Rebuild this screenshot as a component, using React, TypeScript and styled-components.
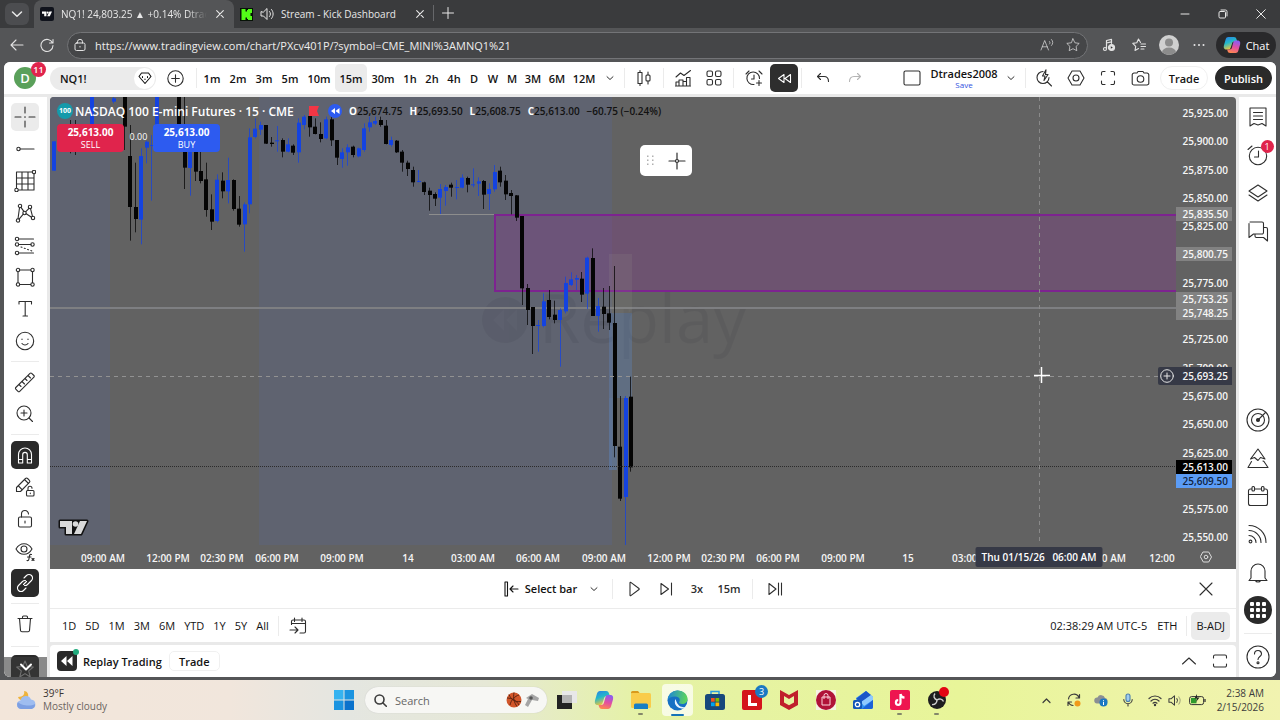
import React from 'react';
import styled, { createGlobalStyle, css } from 'styled-components';

const ui = '"Open Sans", "Noto Sans", sans-serif';

const GlobalStyle = createGlobalStyle`
  *, *::before, *::after { box-sizing: border-box; }
  body { margin: 0; background: #545557; font-family: ${ui}; color: #131313; }
  button, input { font: inherit; color: inherit; border: 0; padding: 0; margin: 0; background: none; }
  button { cursor: pointer; display: inline-flex; align-items: center; justify-content: center; white-space: nowrap; }
  svg { display: block; flex: none; }
`;

/* ---------- icons ---------- */

const Glyph = styled.svg<{ $s: number; $w: number }>`
  width: ${(p) => p.$s}px;
  height: ${(p) => p.$s}px;
  fill: none;
  stroke: currentColor;
  stroke-width: ${(p) => p.$w};
  stroke-linecap: round;
  stroke-linejoin: round;
`;

type IconProps = { size?: number; box?: number; w?: number; children: React.ReactNode };
const Icon = ({ size = 22, box = 22, w = 1.1, children }: IconProps) => (
  <Glyph $s={size} $w={w} viewBox={`0 0 ${box} ${box}`} aria-hidden="true">
    {children}
  </Glyph>
);

const Chevron = ({ size = 8 }: { size?: number }) => (
  <Icon size={size} box={8} w={1}>
    <path d="M1 2.7l3 2.8 3-2.8" />
  </Icon>
);

const TvMark = () => (
  <g stroke="none">
    <path d="M0 0h12v13H6V6H0z" />
    <circle cx="15.5" cy="3" r="2.8" />
    <path d="M20 0h7l-6 13h-7z" />
  </g>
);

const CopilotMark = ({ size }: { size: number }) => (
  <svg width={size} height={size} viewBox="0 0 20 20" aria-hidden="true">
    <defs>
      <linearGradient id="cpA" x1="0" y1="0" x2="0.4" y2="1">
        <stop offset="0" stopColor="#2b7de9" />
        <stop offset=".5" stopColor="#22b8c9" />
        <stop offset="1" stopColor="#f2c53a" />
      </linearGradient>
      <linearGradient id="cpB" x1=".6" y1="0" x2="0.3" y2="1">
        <stop offset="0" stopColor="#8c5cf0" />
        <stop offset=".5" stopColor="#e34fa0" />
        <stop offset="1" stopColor="#ff8a4c" />
      </linearGradient>
    </defs>
    <path d="M6 1h6c2 0 2.5 1 3 2.5L16 6h-3c-2 0-2.6 1-3 2.5L8.5 13c-.5 1.5-1 2-3 2H4c-3 0-3.5-2-3-4.5L3 3.5C3.5 2 4.5 1 6 1z" fill="url(#cpA)" />
    <path d="M14 19H8c-2 0-2.5-1-3-2.5L4.5 15H7c2 0 2.6-1 3-2.5L11.5 7c.5-1.5 1-2 3-2H16c3 0 3.5 2 3 4.5l-2 7c-.5 1.5-1.5 2.5-3 2.5z" fill="url(#cpB)" />
  </svg>
);

/* ---------- browser frame ---------- */

const Page = styled.div`
  display: flex;
  flex-direction: column;
  height: 100vh;
  min-height: 680px;
`;

const TabStrip = styled.div`
  display: flex;
  align-items: stretch;
  height: 28px;
  background: #3a3b3d;
  color: #e8e8e8;
  font-size: 10px;
`;

const TabMenuButton = styled.button`
  width: 24px;
  height: 22px;
  margin: 3px 5px;
  border-radius: 6px;
  background: #4c4d50;
`;

const Tab = styled.div<{ $active?: boolean }>`
  display: flex;
  align-items: center;
  gap: 7px;
  width: 200px;
  padding: 0 8px 0 6px;
  border-radius: 8px 8px 0 0;
  background: ${(p) => (p.$active ? '#545557' : 'transparent')};
`;

const TabTitle = styled.span<{ $fade?: boolean }>`
  flex: 1;
  overflow: hidden;
  white-space: nowrap;
  ${(p) => p.$fade && css`mask-image: linear-gradient(90deg, #000 86%, transparent);`}
`;

const StripButton = styled.button`
  width: 12px;
`;

const NewTab = styled.button`
  width: 28px;
  height: 16px;
  margin-top: 5px;
  margin-left: -1px;
  border-left: 1px solid #66676a;
`;

const WindowButtons = styled.div`
  display: flex;
  margin-left: auto;
`;

const WindowButton = styled.button`
  width: 38px;
`;

const AddressRow = styled.div`
  display: flex;
  align-items: center;
  height: 34px;
  padding: 0 4px 0 5px;
  color: #e2e2e2;
`;

const NavButton = styled.button<{ $w?: number }>`
  width: ${(p) => p.$w ?? 30}px;
  height: 26px;
`;

const AddressField = styled.form`
  display: flex;
  align-items: center;
  flex: 1;
  height: 27px;
  margin-left: 2px;
  margin-right: 6px;
  padding: 0 1px 0 6px;
  border: 1px solid #737477;
  border-radius: 14px;
  background: #454648;
`;

const AddressInput = styled.input`
  flex: 1;
  min-width: 0;
  margin-left: 9px;
  font-size: 11px;
  color: #ededed;
  outline: 0;
`;

const ProfilePic = styled.button`
  width: 20px;
  height: 20px;
  margin: 0 5px;
  border-radius: 50%;
  overflow: hidden;
  background: #d0d0d0;
`;

const ChatButton = styled.button`
  gap: 5px;
  width: 60px;
  height: 26px;
  margin-left: 2px;
  border-radius: 13px;
  background: #29292b;
  color: #fff;
  font-size: 11px;
`;

/* ---------- application shell ---------- */

const Workspace = styled.main`
  display: flex;
  flex-direction: column;
  gap: 3px;
  flex: 1;
  min-height: 0;
  margin: 0 4px 3px 4px;
  border-radius: 6px;
  overflow: hidden;
  background: #e9e9e9;
`;

const TopBar = styled.div`
  display: flex;
  align-items: center;
  height: 32px;
  padding: 0 4px 0 10px;
  background: #fff;
  font-size: 11px;
  font-weight: 600;
`;

const Avatar = styled.button`
  position: relative;
  width: 22px;
  height: 22px;
  border-radius: 50%;
  background: #5aa05a;
  color: #fff;
  font-size: 13px;
`;

const Badge = styled.span`
  position: absolute;
  top: -5px;
  right: -10px;
  min-width: 15px;
  height: 15px;
  border-radius: 8px;
  background: #e0244c;
  color: #fff;
  font-size: 9px;
  line-height: 15px;
  text-align: center;
`;

const SymbolSearch = styled.div`
  display: flex;
  align-items: center;
  width: 106px;
  height: 23px;
  margin-left: 14px;
  padding: 0 1px 0 10px;
  border-radius: 12px;
  background: #ebebeb;
`;

const SymbolName = styled.button`
  flex: 1;
  justify-content: flex-start;
`;

const RoundButton = styled.button`
  width: 21px;
  height: 21px;
  border-radius: 50%;
  background: #fff;
`;

const ToolButton = styled.button<{ $w?: number; $dark?: boolean; $dim?: boolean }>`
  width: ${(p) => p.$w ?? 32}px;
  height: 28px;
  border-radius: 5px;
  color: ${(p) => (p.$dark ? '#fff' : p.$dim ? '#b5b5b5' : '#2e2e2e')};
  background: ${(p) => (p.$dark ? '#2e2e2e' : 'transparent')};
`;

const Divider = styled.span<{ $m?: number }>`
  flex: none;
  width: 1px;
  height: 20px;
  margin: 0 ${(p) => p.$m ?? 3}px;
  background: #ebebeb;
`;

const IntervalButton = styled.button<{ $w: number; $on?: boolean }>`
  width: ${(p) => p.$w}px;
  height: 28px;
  border-radius: 5px;
  font-weight: 600;
  background: ${(p) => (p.$on ? '#ebebeb' : 'transparent')};
`;

const Spacer = styled.span`
  flex: 1;
`;

const LayoutName = styled.button`
  flex-direction: column;
  width: 70px;
  line-height: 12px;
`;

const SaveNote = styled.span`
  font-size: 8px;
  line-height: 9px;
  font-weight: 400;
  color: #2f4fe0;
`;

const PillButton = styled.button<{ $dark?: boolean }>`
  width: ${(p) => (p.$dark ? 57 : 48)}px;
  height: 24px;
  margin-left: ${(p) => (p.$dark ? 7 : 4)}px;
  border: 1px solid ${(p) => (p.$dark ? '#2a2a2a' : '#f0f0f0')};
  border-radius: 12px;
  background: ${(p) => (p.$dark ? '#2a2a2a' : '#fff')};
  color: ${(p) => (p.$dark ? '#fff' : '#131313')};
`;

const Body = styled.div`
  display: flex;
  gap: 3px;
  flex: 1;
  min-height: 0;
`;

const DrawingBar = styled.nav`
  position: relative;
  display: flex;
  flex-direction: column;
  align-items: center;
  gap: 4px;
  width: 43px;
  padding: 6px 1px 0 0;
  overflow: hidden;
  background: #fff;
`;

const DrawButton = styled.button<{ $on?: boolean; $dark?: boolean }>`
  flex: none;
  width: 28px;
  height: 28px;
  border-radius: 5px;
  color: ${(p) => (p.$dark ? '#fff' : '#2e2e2e')};
  background: ${(p) => (p.$dark ? '#2a2a2a' : p.$on ? '#ebebeb' : 'transparent')};
`;

const Rule = styled.span<{ $m?: number }>`
  flex: none;
  width: 28px;
  height: 1px;
  margin: ${(p) => p.$m ?? 2}px 0;
  background: #ebebeb;
`;

const ScrollHint = styled.button`
  position: absolute;
  left: 0;
  right: 0;
  bottom: 0;
  height: 20px;
  background: rgba(60, 60, 60, 0.6);
  color: #fff;
`;

const SideBar = styled.nav`
  display: flex;
  flex-direction: column;
  align-items: center;
  width: 37px;
  padding: 1px 0;
  background: #fff;
`;

const SideButton = styled.button`
  position: relative;
  flex: none;
  width: 30px;
  height: 38px;
  color: #2e2e2e;
`;

const CountBadge = styled(Badge)`
  top: 4px;
  right: -1px;
  min-width: 13px;
  height: 13px;
  line-height: 13px;
`;

const Center = styled.section`
  display: flex;
  flex-direction: column;
  flex: 1;
  min-width: 0;
`;

/* ---------- chart ---------- */

const ChartPane = styled.div`
  position: relative;
  display: grid;
  grid-template-columns: 1fr 60px;
  grid-template-rows: 1fr 24px;
  flex: 1;
  min-height: 0;
  border-radius: 4px 4px 0 0;
  overflow: hidden;
  background: #626262;
  color: #fff;
`;

const Plot = styled.div`
  position: relative;
  overflow: hidden;
`;

const PlotSvg = styled.svg`
  position: absolute;
  inset: 0;
  width: 100%;
  height: 100%;
`;

const Legend = styled.div`
  position: relative;
  display: flex;
  align-items: center;
  height: 16px;
  margin: 6px 0 0 7px;
  white-space: nowrap;
`;

const SymbolLogo = styled.span`
  width: 16px;
  height: 16px;
  margin-right: 2px;
  border-radius: 50%;
  background: #159aab;
  font-size: 7px;
  font-weight: 700;
  line-height: 16px;
  text-align: center;
`;

const SymbolTitle = styled.h1`
  width: 234px;
  margin: 0;
  font-size: 12px;
  font-weight: 600;
`;

const Ohlc = styled.dl`
  display: flex;
  gap: 7px;
  margin: 0 0 0 2px;
  font-size: 10px;
  color: #111;
`;

const OhlcItem = styled.div`
  display: flex;
  dt { color: #fff; font-weight: 700; }
  dd { margin: 0; font-weight: 600; }
`;

const Quotes = styled.div`
  position: relative;
  display: flex;
  margin: 5px 0 0 7px;
`;

const QuoteButton = styled.button<{ $sell?: boolean }>`
  flex-direction: column;
  width: 67px;
  height: 28px;
  border-radius: 4px;
  background: ${(p) => (p.$sell ? '#e0244c' : '#2d5bf0')};
  font-size: 9px;
  line-height: 11px;
  strong { font-size: 10px; line-height: 13px; font-weight: 700; }
`;

const Spread = styled.span`
  width: 29px;
  font-size: 9px;
  line-height: 26px;
  text-align: center;
`;

const FloatTools = styled.div`
  position: absolute;
  left: 590px;
  top: 48px;
  display: flex;
  align-items: center;
  gap: 12px;
  width: 52px;
  height: 31px;
  padding: 0 6px 0 5px;
  border-radius: 5px;
  background: #fff;
  color: #2e2e2e;
`;

const TvLogo = styled.svg`
  position: absolute;
  left: 8px;
  bottom: 8px;
`;

const PriceAxis = styled.div`
  position: relative;
  overflow: hidden;
`;

const PriceLabel = styled.span<{ $bg?: string; $fg?: string; $tall?: boolean }>`
  position: absolute;
  left: 0;
  width: 56px;
  height: ${(p) => (p.$tall ? 18 : 14)}px;
  margin-top: ${(p) => (p.$tall ? -9 : -7)}px;
  padding-right: 4px;
  line-height: ${(p) => (p.$tall ? 18 : 14)}px;
  font-size: 10px;
  font-weight: 600;
  text-align: right;
  background: ${(p) => p.$bg ?? 'transparent'};
  color: ${(p) => p.$fg ?? '#f6f6f6'};
`;

const AddAtPrice = styled.button`
  position: absolute;
  right: 0;
  width: 18px;
  height: 18px;
  margin-top: -9px;
  border-radius: 2px 0 0 2px;
  background: #363946;
  color: #e6e6e6;
`;

const TimeAxis = styled.div`
  position: relative;
  overflow: hidden;
`;

const TimeLabel = styled.span`
  position: absolute;
  top: 6px;
  transform: translateX(-50%);
  font-size: 10px;
  font-weight: 600;
  line-height: 14px;
  white-space: nowrap;
  color: #f6f6f6;
`;

const TimeCursor = styled.span`
  position: absolute;
  top: 2px;
  width: 127px;
  height: 20px;
  transform: translateX(-50%);
  border-radius: 2px;
  background: #363946;
  font-size: 10px;
  font-weight: 600;
  line-height: 20px;
  text-align: center;
  white-space: pre;
`;

const AxisSettings = styled.button`
  color: #dcdcdc;
`;

const BAR_STEP = 5.443;
const FIRST_BAR = 4;

/* [bar, high, body top, body bottom, low, rising], in thirds of a pixel below the scale's top */
const candles: [number, number, number, number, number, 0 | 1][] = [
  [0, 139, 139, 227, 227, 1], [3, 75, 90, 130, 175, 0], [4, 75, 95, 140, 180, 0], [7, 0, 0, 90, 100, 1],
  [11, 5, 10, 20, 25, 1], [13, 0, 0, 95, 165, 0], [14, 90, 183, 336, 437, 0], [15, 203, 336, 372, 412, 0],
  [16, 160, 183, 374, 448, 1], [17, 137, 140, 158, 205, 1], [18, 120, 150, 152, 317, 1], [19, 0, 0, 100, 140, 1],
  [23, 0, 0, 90, 120, 0], [24, 0, 90, 218, 282, 0], [25, 120, 140, 219, 302, 1], [26, 120, 150, 230, 258, 0],
  [27, 170, 228, 258, 265, 0], [28, 203, 253, 345, 365, 0], [29, 298, 343, 380, 405, 0], [30, 238, 254, 378, 382, 1],
  [31, 232, 257, 289, 310, 0], [32, 188, 255, 289, 325, 1], [33, 253, 255, 342, 347, 0], [34, 303, 341, 389, 395, 0],
  [35, 322, 328, 388, 470, 1], [36, 100, 127, 328, 355, 1], [37, 70, 101, 126, 130, 1], [38, 80, 90, 104, 120, 1],
  [39, 90, 90, 146, 147, 0], [40, 126, 143, 147, 155, 0], [41, 93, 136, 138, 170, 1], [42, 130, 135, 170, 187, 0],
  [43, 130, 148, 170, 172, 1], [44, 148, 152, 173, 180, 0], [45, 70, 83, 172, 203, 1], [46, 60, 65, 90, 103, 1],
  [47, 58, 63, 97, 125, 0], [48, 70, 95, 117, 118, 0], [49, 82, 117, 132, 142, 0], [50, 65, 73, 130, 133, 1],
  [51, 65, 73, 136, 153, 0], [52, 135, 135, 188, 210, 0], [53, 160, 172, 192, 218, 1], [54, 148, 157, 172, 212, 1],
  [55, 152, 155, 180, 187, 0], [56, 158, 160, 184, 187, 1], [57, 85, 100, 165, 170, 1], [58, 65, 82, 97, 110, 1],
  [59, 65, 78, 86, 90, 1], [60, 65, 75, 90, 95, 0], [61, 75, 92, 147, 148, 0], [62, 125, 135, 150, 155, 1],
  [63, 135, 137, 172, 174, 0], [64, 165, 170, 203, 230, 0], [65, 197, 203, 222, 243, 0], [66, 215, 225, 262, 275, 0],
  [67, 225, 258, 261, 262, 1], [68, 260, 262, 291, 300, 0], [69, 278, 287, 300, 347, 0], [70, 292, 297, 311, 333, 0],
  [71, 267, 282, 308, 357, 1], [72, 270, 276, 288, 332, 1], [73, 263, 269, 278, 305, 0], [74, 255, 276, 278, 313, 1],
  [75, 238, 248, 278, 280, 1], [76, 245, 249, 269, 292, 0], [77, 220, 268, 270, 277, 1], [78, 247, 259, 266, 303, 1],
  [79, 255, 258, 299, 342, 0], [80, 265, 282, 297, 345, 1], [81, 210, 231, 283, 290, 1], [82, 215, 227, 262, 275, 0],
  [83, 240, 257, 298, 315, 0], [84, 285, 294, 303, 358, 0], [85, 300, 301, 368, 378, 0], [86, 363, 363, 580, 630, 0],
  [87, 567, 579, 645, 690, 0], [88, 636, 636, 693, 777, 0], [89, 675, 690, 693, 770, 1], [90, 595, 619, 693, 697, 1],
  [91, 585, 615, 666, 673, 0], [92, 617, 659, 675, 685, 0], [93, 640, 645, 675, 815, 1], [94, 545, 564, 649, 655, 1],
  [95, 532, 553, 570, 573, 1], [96, 540, 549, 554, 585, 1], [97, 531, 551, 599, 621, 0], [98, 485, 488, 596, 642, 1],
  [99, 460, 489, 663, 663, 0], [100, 609, 633, 663, 710, 1], [101, 579, 635, 657, 702, 0], [102, 573, 655, 683, 705, 0],
  [103, 513, 684, 1053, 1087, 0], [104, 903, 1055, 1211, 1218, 0], [105, 903, 909, 1206, 1352, 1], [106, 845, 905, 1117, 1130, 0],
];

const toY = (v: number) => v / 3 - 2;
const priceY = (price: number) => Math.round(16 + (25925 - price) * 1.132);
const gridPrices = [25925, 25900, 25875, 25850, 25825, 25775, 25725, 25700, 25675, 25650, 25625, 25575, 25550];
const money = (n: number) => n.toLocaleString('en-US', { minimumFractionDigits: 2 });

const tags = [
  { price: 25835.5, y: 117, bg: '#828282' },
  { price: 25800.75, y: 157, bg: '#828282' },
  { price: 25753.25, y: 202, bg: '#828282' },
  { price: 25748.25, y: 216, bg: '#828282' },
  { price: 25613, y: 370, bg: '#000' },
  { price: 25609.5, y: 384, bg: '#5b9cf6', fg: '#10233f' },
];

const times: [number, string][] = [
  [53, '09:00 AM'], [118, '12:00 PM'], [172, '02:30 PM'], [227, '06:00 PM'], [292, '09:00 PM'], [358, '14'],
  [423, '03:00 AM'], [488, '06:00 AM'], [554, '09:00 AM'], [619, '12:00 PM'], [673, '02:30 PM'], [728, '06:00 PM'],
  [793, '09:00 PM'], [858, '15'], [924, '03:00 AM'], [1054, '09:00 AM'], [1112, '12:00'],
];

const ChartDrawing = () => (
  <PlotSvg aria-label="NQ1! 15 minute candles">
    <rect x="0" y="0" width="60" height="100%" fill="#5f6370" />
    <rect x="209" y="0" width="353" height="100%" fill="#5f6370" />
    <g opacity=".05" fill="#000010">
      <circle cx="455" cy="223" r="23" />
      <text x="489" y="246" fontFamily={ui} fontSize="67">Replay</text>
    </g>
    <path d="M454 212l-11 11 11 11zM467 212l-11 11 11 11z" fill="#5f6370" opacity=".6" />
    <line x1="0" x2="100%" y1="211" y2="211" stroke="#7e7f82" strokeWidth="2" />
    <line x1="379" x2="444" y1="117.5" y2="117.5" stroke="#8d8d8d" />
    <rect x="445" y="118" width="100%" height="76" fill="rgba(128,63,135,.4)" stroke="#7d2390" strokeWidth="2" />
    <rect x="559" y="157" width="23" height="59" fill="rgba(160,160,150,.13)" />
    <rect x="559" y="216" width="23" height="85" fill="rgba(91,156,246,.22)" />
    <rect x="559" y="301" width="8" height="72" fill="rgba(91,156,246,.28)" />
    {candles.map(([i, high, top, bottom, low, up]) => {
      const x = FIRST_BAR + i * BAR_STEP;
      return (
        <g key={i} fill={up ? '#1443e0' : '#050505'}>
          <rect x={Math.round(x - 0.5)} y={toY(high)} width="1" height={toY(low) - toY(high)} opacity=".75" />
          <rect x={Math.round(x - 2)} y={toY(top)} width="4" height={Math.max(1, toY(bottom) - toY(top))} />
        </g>
      );
    })}
    <line x1="0" x2="100%" y1="369.5" y2="369.5" stroke="#2b2b2b" strokeDasharray="1 1" />
    <line x1="0" x2="100%" y1="279.5" y2="279.5" stroke="#929292" strokeDasharray="4 4" />
    <line x1="989.5" x2="989.5" y1="0" y2="100%" stroke="#8a8a8a" strokeDasharray="4 4" />
    <path d="M984 278.5h16M991.5 270v16" stroke="#fff" strokeWidth="1.5" fill="none" />
  </PlotSvg>
);

const Chart = () => (
  <ChartPane>
    <Plot>
      <ChartDrawing />
      <Legend>
        <SymbolLogo>100</SymbolLogo>
        <SymbolTitle>NASDAQ 100 E-mini Futures · 15 · CME</SymbolTitle>
        <svg width="38" height="16" viewBox="0 0 38 16" aria-hidden="true">
          <path d="M0 3h10l-2 5 2 5H0z" fill="#f23645" />
          <circle cx="26" cy="8" r="7" fill="#2d5bf0" />
          <path d="M26 5v6l-4-3zM30.5 5v6l-4-3z" fill="#fff" />
        </svg>
        <Ohlc>
          <OhlcItem><dt>O</dt><dd>25,674.75</dd></OhlcItem>
          <OhlcItem><dt>H</dt><dd>25,693.50</dd></OhlcItem>
          <OhlcItem><dt>L</dt><dd>25,608.75</dd></OhlcItem>
          <OhlcItem><dt>C</dt><dd>25,613.00</dd></OhlcItem>
          <OhlcItem><dd>−60.75 (−0.24%)</dd></OhlcItem>
        </Ohlc>
      </Legend>
      <Quotes>
        <QuoteButton $sell><strong>25,613.00</strong>SELL</QuoteButton>
        <Spread>0.00</Spread>
        <QuoteButton><strong>25,613.00</strong>BUY</QuoteButton>
      </Quotes>
      <FloatTools>
        <Icon size={11} box={11} w={0}>
          <g fill="#b0b0b0">
            {[2, 7].map((x) => [0, 4, 8].map((y) => <rect key={`${x}${y}`} x={x} y={y + 0.5} width="1.5" height="1.5" />))}
          </g>
        </Icon>
        <Icon size={18} box={18} w={1.2}>
          <path d="M1 9h6M11 9h6M9 1v6M9 11v6" /><circle cx="9" cy="9" r="1.5" />
        </Icon>
      </FloatTools>
      <TvLogo width="31" height="18" viewBox="-2 -2 31 18" fill="#d9d9d9" aria-hidden="true">
        <g stroke="#111" strokeWidth="3" fill="#111" strokeLinejoin="round">
          <path d="M0 0h27l-6 13H6V6H0z" />
        </g>
        <TvMark />
      </TvLogo>
      <AddAtPrice aria-label="Add at price" style={{ top: priceY(25693.25) + 1 }}>
        <Icon size={14} box={14} w={1}><circle cx="7" cy="7" r="6.3" /><path d="M4 7h6M7 4v6" /></Icon>
      </AddAtPrice>
    </Plot>
    <PriceAxis>
      {gridPrices.map((p) => <PriceLabel key={p} style={{ top: priceY(p) }}>{money(p)}</PriceLabel>)}
      {tags.map((t) => (
        <PriceLabel key={t.price} $bg={t.bg} $fg={t.fg} style={{ top: t.y }}>{money(t.price)}</PriceLabel>
      ))}
      <PriceLabel $tall $bg="#363946" style={{ top: priceY(25693.25) + 1 }}>25,693.25</PriceLabel>
    </PriceAxis>
    <TimeAxis>
      {times.map(([x, label]) => <TimeLabel key={x} style={{ left: x }}>{label}</TimeLabel>)}
      <TimeCursor style={{ left: 989 }}>{'Thu 01/15/26   06:00 AM'}</TimeCursor>
    </TimeAxis>
    <AxisSettings aria-label="Axis settings">
      <Icon size={12} box={12} w={1}><path d="M3.3 1h5.4L11.500 6 8.700 11H3.300L.5 6z" /><circle cx="6" cy="6" r="1.8" /></Icon>
    </AxisSettings>
  </ChartPane>
);

/* ---------- bars below the chart ---------- */

const ReplayBar = styled.div`
  display: grid;
  grid-template-columns: 1fr auto 1fr;
  align-items: center;
  height: 40px;
  border-bottom: 1px solid #ebebeb;
  background: #fff;
  font-size: 11px;
  font-weight: 600;
`;

const ReplayControls = styled.div`
  grid-column: 2;
  display: flex;
  align-items: center;
  padding-left: 4px;
`;

const CloseReplay = styled(ToolButton)`
  justify-self: end;
  margin-right: 14px;
`;

const SelectBar = styled.button`
  gap: 6px;
  width: 82px;
`;

const RangeBar = styled.div`
  display: flex;
  align-items: center;
  height: 33px;
  padding: 0 6px 0 8px;
  background: #fff;
  font-size: 11px;
`;

const Ranges = styled.div`
  display: flex;
  gap: 1px;
`;

const TextButton = styled.button<{ $on?: boolean; $tight?: boolean }>`
  height: 28px;
  padding: 0 ${(p) => (p.$tight ? 4 : 5)}px;
  border-radius: 5px;
  font-weight: 500;
  background: ${(p) => (p.$on ? '#ebebeb' : 'transparent')};
`;

const TradingBar = styled.div`
  display: flex;
  align-items: center;
  height: 32px;
  margin-top: 3px;
  padding: 0 0 0 7px;
  border-radius: 4px 4px 0 0;
  background: #fff;
  font-size: 11px;
  font-weight: 600;
`;

const ReplayMark = styled.span`
  position: relative;
  display: grid;
  place-items: center;
  width: 20px;
  height: 20px;
  margin-right: 6px;
  border-radius: 4px;
  background: #2a2a2a;
`;

const OnlineDot = styled.span`
  position: absolute;
  top: -2px;
  right: -2px;
  width: 6px;
  height: 6px;
  border-radius: 50%;
  background: #22ab7d;
`;

const OutlineButton = styled.button`
  width: 51px;
  height: 20px;
  margin-left: 7px;
  border: 1px solid #f0f0f0;
  border-radius: 5px;
`;

/* ---------- desktop task bar ---------- */

const TaskBar = styled.footer`
  display: grid;
  grid-template-columns: 1fr auto 1fr;
  align-items: center;
  height: 40px;
  background: linear-gradient(90deg, #f3e6da 0, #f1e6dc 18%, #e4e6e1 27%, #e6e8d6 38%, #e5f2a6 50%, #e8f599 75%, #f1f3b0 100%);
  color: #3c3c3c;
`;

const Weather = styled.button`
  justify-self: start;
  gap: 6px;
  margin-left: 16px;
  font-size: 10px;
  line-height: 13px;
  text-align: left;
`;

const WeatherText = styled.span`
  display: flex;
  flex-direction: column;
  color: #6b645f;
  strong { font-weight: 400; color: #3a3532; }
`;

const TaskIcons = styled.div`
  display: flex;
  align-items: center;
`;

const TaskButton = styled.button<{ $active?: boolean; $open?: boolean }>`
  position: relative;
  width: 31px;
  height: 32px;
  margin: 0 3px;
  border-radius: 4px;
  background: ${(p) => (p.$active ? 'rgba(255,255,255,.7)' : 'transparent')};
  &::after {
    content: '';
    position: absolute;
    bottom: ${(p) => (p.$active ? 0 : 1)}px;
    width: ${(p) => (p.$active ? 13 : p.$open ? 5 : 0)}px;
    height: 2px;
    border-radius: 1px;
    background: ${(p) => (p.$active ? '#1673b8' : '#83876a')};
  }
`;

const SearchBox = styled.label`
  display: flex;
  align-items: center;
  width: 182px;
  height: 26px;
  margin: 0 1px 0 3px;
  padding: 0 7px 0 9px;
  border-radius: 13px;
  background: #f7f7f4;
  box-shadow: 0 0 1px #bbb;
`;

const SearchInput = styled.input`
  flex: 1;
  min-width: 0;
  margin-left: 8px;
  font-size: 11px;
  outline: 0;
  &::placeholder { color: #666; opacity: 1; }
`;

const Tray = styled.div`
  display: flex;
  align-items: center;
  justify-self: end;
  margin-right: 16px;
`;

const TrayButton = styled.button<{ $w?: number }>`
  width: ${(p) => p.$w ?? 27}px;
  height: 24px;
`;

const Clock = styled.time`
  width: 50px;
  font-size: 10px;
  line-height: 14px;
  text-align: right;
`;

/* ---------- data for the button rows ---------- */

const intervals: [string, number][] = [
  ['1m', 26], ['2m', 26], ['3m', 26], ['5m', 26], ['10m', 32], ['15m', 32], ['30m', 32], ['1h', 22], ['2h', 22], ['4h', 22],
  ['D', 18], ['W', 20], ['M', 18], ['3M', 24], ['6M', 24], ['12M', 30],
];

const ranges = ['1D', '5D', '1M', '3M', '6M', 'YTD', '1Y', '5Y', 'All'];

const drawTools: { name: string; art: React.ReactNode; on?: boolean }[] = [
  { name: 'Cross', on: true, art: <path d="M11 1v6M11 15v6M1 11h6M15 11h6M10.5 11h1" /> },
  { name: 'Trend line', art: <><circle cx="4.5" cy="11" r="1.7" /><path d="M6.2 11H20" /></> },
  { name: 'Gann', art: <><path d="M2.5 2v16M2.5 2h15.500M20 4v16M4.500 20H20M8 2v18M14 2v18M2.500 8H20M2.500 14H20" /><circle cx="20" cy="2" r="1.7" fill="#fff" /><circle cx="2.5" cy="20" r="1.7" fill="#fff" /></> },
  { name: 'Patterns', art: <><circle cx="6" cy="4" r="1.7" /><circle cx="16" cy="5" r="1.7" /><circle cx="10.5" cy="11" r="1.7" /><circle cx="4" cy="18.5" r="1.7" /><circle cx="19" cy="16" r="1.7" /><path d="M5.5 5.700l-1.500 11M7 5.400l3 4.200M15 6.300l-3.200 3.400M16.500 6.600l2 7.800M12.200 11.700l5.300 3.500M9.300 12.200l-4.200 5" /></> },
  { name: 'Forecast', art: <><circle cx="3" cy="5" r="1.7" /><circle cx="3" cy="10.5" r="1.7" /><circle cx="3" cy="19" r="1.7" /><circle cx="18.5" cy="10.5" r="1.7" /><path d="M5 5h14.500M5 10.500h12M5 19h14.500" /><path d="M7 13l11 4" strokeDasharray="1 2.500" /></> },
  { name: 'Shapes', art: <><circle cx="4" cy="4" r="1.7" /><circle cx="18.5" cy="4" r="1.7" /><circle cx="4" cy="18.5" r="1.7" /><circle cx="18.5" cy="18.5" r="1.7" /><path d="M5.700 4h11M5.700 18.500h11M4 5.700v11M18.500 5.700v11" /></> },
  { name: 'Text', art: <path d="M5 6V3.500h12.500V6M11.200 3.500v14.500M9 18h4.500" /> },
  { name: 'Emoji', art: <><circle cx="11" cy="11" r="8.7" /><path d="M8 9v.5M14 9v.5M8 13.500c1.500 2 4.500 2 6 0" /></> },
];

const Tile = ({ children, bg }: { children?: React.ReactNode; bg: string }) => (
  <svg width="20" height="20" viewBox="0 0 20 20" aria-hidden="true"><rect width="20" height="20" rx="2" fill={bg} />{children}</svg>
);

const TaskBadge = styled.span`
  position: absolute;
  top: 1px;
  right: -1px;
  width: 13px;
  height: 13px;
  border-radius: 50%;
  background: #1a78c2;
  color: #fff;
  font-size: 9px;
  line-height: 13px;
`;

const RedDot = styled(TaskBadge)`
  top: 3px;
  right: 3px;
  width: 10px;
  height: 10px;
  background: #e30613;
`;

export default function App() {
  return (
    <Page>
      <GlobalStyle />
      <TabStrip>
        <TabMenuButton aria-label="Tab actions"><Chevron size={12} /></TabMenuButton>
        <Tab $active>
          <svg width="14" height="14" viewBox="0 0 14 14" aria-hidden="true">
            <rect width="14" height="14" rx="2" fill="#10131c" />
            <g fill="#fff" transform="translate(2 4.500) scale(.37)"><TvMark /></g>
          </svg>
          <TabTitle $fade>NQ1! 24,803.25 ▲ +0.14% Dtrade</TabTitle>
          <StripButton aria-label="Close tab"><Icon size={8} box={8}><path d="M.7.7l6.600 6.600M7.300.7L.7 7.300" /></Icon></StripButton>
        </Tab>
        <Tab>
          <svg width="13" height="13" viewBox="0 0 13 13" aria-hidden="true">
            <rect width="13" height="13" fill="#071207" />
            <path d="M1.500 1h4v2.500H7V2h1V1h4v4h-1.500v3H12v4H8v-1H7V9.500H5.500V12h-4z" fill="#53fc18" />
          </svg>
          <Icon size={14} box={14} w={1}><path d="M1 5v4h2.500L7 12.500v-11L3.500 5zM9.500 4.500c1.300 1.500 1.300 3.500 0 5M11.500 2.500c2.200 2.500 2.200 6.500 0 9" /></Icon>
          <TabTitle>Stream - Kick Dashboard</TabTitle>
          <StripButton aria-label="Close tab"><Icon size={8} box={8}><path d="M.7.7l6.600 6.600M7.300.7L.7 7.300" /></Icon></StripButton>
        </Tab>
        <NewTab aria-label="New tab"><Icon size={12} box={12} w={1}><path d="M6 .5v11M.5 6h11" /></Icon></NewTab>
        <WindowButtons>
          <WindowButton aria-label="Minimize"><Icon size={10} box={10} w={1}><path d="M1 5h8" /></Icon></WindowButton>
          <WindowButton aria-label="Restore"><Icon size={10} box={10} w={1}><path d="M1 3.500A1 1 0 012 2.500h4.500a1 1 0 011 1V8a1 1 0 01-1 1H2a1 1 0 01-1-1zM3 1h4.500A1.500 1.500 0 019 2.500V7" /></Icon></WindowButton>
          <WindowButton aria-label="Close"><Icon size={10} box={10} w={1}><path d="M.7.7l8.600 8.600M9.300.7L.7 9.300" /></Icon></WindowButton>
        </WindowButtons>
      </TabStrip>

      <AddressRow>
        <NavButton $w={24} aria-label="Back"><Icon size={14} box={14}><path d="M13 7H1M6 2L1 7l5 5" /></Icon></NavButton>
        <NavButton $w={36} aria-label="Reload"><Icon size={14} box={14}><path d="M12.500 5A6 6 0 1013 7.500M13 1.500V5H9.500" /></Icon></NavButton>
        <AddressField onSubmit={(e) => e.preventDefault()}>
          <Icon size={12} box={12} w={1}><rect x="1" y="4" width="10" height="7.5" rx="1.5" /><path d="M3.500 4V2.800a2.500 2.500 0 015 0V4M6 7.300v.8" /></Icon>
          <AddressInput aria-label="Address" defaultValue="https://www.tradingview.com/chart/PXcv401P/?symbol=CME_MINI%3AMNQ1%21" />
          <NavButton $w={26} type="button" aria-label="Read aloud">
            <Icon size={14} box={14} w={1}><path d="M1 12L4.700 2.500 8.500 12M2.300 8.800h5M9.500 3.500c.7.700.7 1.800 0 2.500M11.500 1.500c1.700 1.700 1.700 4.300 0 6" opacity=".7" /></Icon>
          </NavButton>
          <NavButton $w={26} type="button" aria-label="Add to favorites">
            <Icon size={14} box={14} w={1}><path d="M7 .8l1.900 4 4.300.6-3.100 3 .7 4.300L7 10.700l-3.800 2 .7-4.300-3.100-3 4.300-.6z" opacity=".7" /></Icon>
          </NavButton>
        </AddressField>
        <NavButton aria-label="Media"><Icon size={14} box={14} w={1.2}><path d="M4.500 10.500V2.500l5-1.200v4M4.500 5l5-1.200" /><circle cx="3" cy="11" r="1.5" /><circle cx="9.5" cy="9.5" r="3" fill="#e2e2e2" /><path d="M8.800 8.300v2.400l2-1.200z" fill="#333" stroke="none" /></Icon></NavButton>
        <NavButton aria-label="Favorites"><Icon size={14} box={14} w={1.1}><path d="M8.500 4.500L6.500 1 4.800 4.800.8 5.400l2.900 2.900-.7 4.200 3.500-1.900M9 6h4.500M9 8.500h4.500M9 11h3" /></Icon></NavButton>
        <ProfilePic aria-label="Profile"><svg width="20" height="20" viewBox="0 0 20 20"><circle cx="10" cy="7.5" r="4" fill="#8c8c8c" /><ellipse cx="10" cy="17.5" rx="7" ry="5" fill="#8c8c8c" /></svg></ProfilePic>
        <NavButton aria-label="More"><Icon size={12} box={12} w={0}><g fill="#e8e8e8"><circle cx="1.5" cy="6" r="1" /><circle cx="6" cy="6" r="1" /><circle cx="10.5" cy="6" r="1" /></g></Icon></NavButton>
        <ChatButton><CopilotMark size={18} />Chat</ChatButton>
      </AddressRow>

      <Workspace>
        <TopBar>
          <Avatar aria-label="Account">D<Badge>11</Badge></Avatar>
          <SymbolSearch>
            <SymbolName>NQ1!</SymbolName>
            <RoundButton aria-label="Contract">
              <Icon size={14} box={14}><path d="M3.500 2h7L13 5.500 7 12.500 1 5.500zM4.500 5.500v1M7 8v.5M9.500 5.500v1" /></Icon>
            </RoundButton>
          </SymbolSearch>
          <ToolButton $w={38} aria-label="Add symbol"><Icon size={17} box={17}><circle cx="8.5" cy="8.5" r="7.7" /><path d="M8.500 4.700v7.600M4.700 8.500h7.600" /></Icon></ToolButton>
          <Divider $m={2} />
          {intervals.map(([label, w]) => (
            <IntervalButton key={label} $w={w} $on={label === '15m'}>{label}</IntervalButton>
          ))}
          <ToolButton $w={22} aria-label="More intervals"><Chevron /></ToolButton>
          <Divider />
          <ToolButton aria-label="Chart type"><Icon size={18} box={18}><path d="M5 1.500v2M5 14.500v2M3 3.500h4v11H3zM13 3v3M13 12v3" /><rect x="11" y="6" width="4" height="6" rx="1" /></Icon></ToolButton>
          <Divider />
          <ToolButton aria-label="Indicators"><Icon size={18} box={18}><path d="M2 17v-4h3v4zM5 17V11h4v6M9 17v-4.500h3.500V17M12.500 17V8.500H16V17zM2 8l4.500-4 3.500 2.500L16.500 1.500M1.500 17h15" /></Icon></ToolButton>
          <ToolButton $w={30} aria-label="Templates"><Icon size={18} box={18}><rect x="2" y="2" width="5.5" height="5.5" rx="1.5" /><rect x="10.5" y="2" width="5.5" height="5.5" rx="1.5" /><rect x="2" y="10.5" width="5.5" height="5.5" rx="1.5" /><rect x="10.5" y="10.5" width="5.5" height="5.5" rx="1.5" /></Icon></ToolButton>
          <Divider $m={4} />
          <ToolButton aria-label="Alert"><Icon size={18} box={18}><path d="M14.500 9.500A6.300 6.300 0 109 15.500M9 6v4H6.500M1 5l3-3M17 5l-3-3M14 11.500v5M11.500 14h5" /></Icon></ToolButton>
          <ToolButton $w={28} $dark aria-label="Replay"><Icon size={15} box={15}><path d="M7 3.500v8L1.500 7.500zM13.500 3.500v8L8 7.500z" /></Icon></ToolButton>
          <Divider />
          <ToolButton $w={36} aria-label="Undo"><Icon size={14} box={14}><path d="M4.500 2.500l-3 3 3 3M1.500 5.500H8c3 0 4.500 2 4.500 5" /></Icon></ToolButton>
          <ToolButton $w={28} $dim aria-label="Redo"><Icon size={14} box={14}><path d="M9.500 2.500l3 3-3 3M12.500 5.500H6c-3 0-4.500 2-4.500 5" /></Icon></ToolButton>
          <Spacer />
          <ToolButton $w={34} aria-label="Layout"><Icon size={18} box={18}><rect x="1" y="2" width="16" height="14" rx="1.5" /></Icon></ToolButton>
          <LayoutName>Dtrades2008<SaveNote>Save</SaveNote></LayoutName>
          <ToolButton $w={24} aria-label="Manage layouts"><Chevron /></ToolButton>
          <Divider $m={2} />
          <ToolButton aria-label="Quick search"><Icon size={18} box={18}><path d="M8 2.500a6 6 0 106 6M12 12.500l4.500 4.500M11 .8L7.500 7H10l-1 4.500L13 5.500h-2.500z" /></Icon></ToolButton>
          <ToolButton aria-label="Settings"><Icon size={18} box={18}><path d="M5 2h8l4 7-4 7H5L1 9z" /><circle cx="9" cy="9" r="3" /></Icon></ToolButton>
          <ToolButton aria-label="Fullscreen"><Icon size={18} box={18}><path d="M2.500 6V4a1.500 1.500 0 011.500-1.500h2M12 2.500h2A1.500 1.500 0 0115.500 4v2M15.500 12v2a1.500 1.500 0 01-1.500 1.500h-2M6 15.500H4A1.500 1.500 0 012.500 14v-2" /></Icon></ToolButton>
          <ToolButton aria-label="Snapshot"><Icon size={19} box={19}><path d="M6 4l1-1.500h5L13 4h3a1.800 1.800 0 011.800 1.800v8.400A1.800 1.800 0 0116 16H3a1.800 1.800 0 01-1.800-1.800V5.800A1.800 1.800 0 013 4z" /><circle cx="9.5" cy="10" r="3.3" /></Icon></ToolButton>
          <PillButton>Trade</PillButton>
          <PillButton $dark>Publish</PillButton>
        </TopBar>

        <Body>
          <DrawingBar aria-label="Drawing tools">
            {drawTools.map((t) => (
              <DrawButton key={t.name} $on={t.on} aria-label={t.name}><Icon>{t.art}</Icon></DrawButton>
            ))}
            <Rule />
            <DrawButton aria-label="Measure"><Icon><path d="M1.800 16.500L16 2.300a1.200 1.200 0 011.700 0l2.200 2.200a1.200 1.200 0 010 1.700L5.700 20.400a1.200 1.200 0 01-1.700 0l-2.200-2.200a1.200 1.200 0 010-1.700zM5 13.500l2 2M8 10.500l2.500 2.500M11 7.500l2 2M14 4.500l2.500 2.500" /></Icon></DrawButton>
            <DrawButton aria-label="Zoom in"><Icon><circle cx="10" cy="10" r="7" /><path d="M15 15l3.500 3.500M10 7v6M7 10h6" /></Icon></DrawButton>
            <Rule />
            <DrawButton $dark aria-label="Magnet"><Icon><path d="M4.500 19v-8.500a6.500 6.500 0 0113 0V19h-4.200v-8.300a2.300 2.300 0 00-4.600 0V19zM4.500 15.500h4.200M13.300 15.500h4.200" /></Icon></DrawButton>
            <DrawButton aria-label="Stay in drawing mode"><Icon><path d="M2.500 15.500v-4L11.500 2.500a1.500 1.500 0 012.100 0l1.800 1.800a1.500 1.500 0 010 2.100L6.500 15.500zM4.500 10l3.800 3.800M11 4l3.500 3.500" /><rect x="12.5" y="14.5" width="7.5" height="5.5" rx="1" /><path d="M14 14.500v-2.200a2 2 0 014 0M16.300 17v.6" /></Icon></DrawButton>
            <DrawButton aria-label="Lock drawings"><Icon><rect x="4.5" y="9" width="13" height="10" rx="1.5" /><path d="M7.500 9V6a3.500 3.500 0 017 0M11 13v2" /></Icon></DrawButton>
            <DrawButton aria-label="Hide indicators"><Icon><path d="M2 9c4-7 12-7 16 0-4 7-12 7-16 0z" /><circle cx="10" cy="9" r="3" /><path d="M17.500 14.500c-2-.5-2 1-2.300 3s-.5 3.500-2.200 3M13.500 17h3.500M18 18.500l2 2M20 18.500l-2 2" /></Icon></DrawButton>
            <DrawButton $dark aria-label="Link"><Icon><path d="M10 6l2.500-2.500a3.500 3.500 0 015 0 3.500 3.500 0 010 5L13.500 12.500a3.500 3.500 0 01-3 1M12 16l-2.500 2.500a3.500 3.500 0 01-5 0 3.500 3.500 0 010-5L8.500 9.500a3.500 3.500 0 013-1M9.500 12.500l3-3" /></Icon></DrawButton>
            <Rule />
            <DrawButton aria-label="Remove"><Icon><path d="M4 5.500h14M8.500 5.500V4a1 1 0 011-1h3a1 1 0 011 1v1.500M5.500 5.500l1 12a1.500 1.500 0 001.500 1.300h6a1.500 1.500 0 001.500-1.300l1-12" /></Icon></DrawButton>
            <Rule $m={4} />
            <DrawButton $dark aria-label="Favorites bar"><Icon><path d="M11 3l2.300 5.500 6 .5-4.600 3.800L16.200 19 11 15.600 5.800 19l1.500-6.200L2.700 9l6-.5z" opacity=".7" /></Icon></DrawButton>
            <ScrollHint aria-label="Scroll down"><Icon size={16} box={16} w={2}><path d="M3 5.500l5 5 5-5" /></Icon></ScrollHint>
          </DrawingBar>

          <Center>
            <Chart />
            <ReplayBar>
              <ReplayControls>
                <SelectBar>
                  <Icon size={16} box={16}><path d="M2 1h2.500v14H2zM15 8H7M10 5L7 8l3 3" /></Icon>
                  Select bar
                </SelectBar>
                <ToolButton $w={26} aria-label="Selection options"><Chevron /></ToolButton>
                <Divider $m={5} />
                <ToolButton aria-label="Play"><Icon size={16} box={16}><path d="M4 1.800v12.400a.5.500 0 00.8.400L13 8.500a.6.600 0 000-1L4.800 1.400a.5.500 0 00-.8.400z" /></Icon></ToolButton>
                <ToolButton aria-label="Forward"><Icon size={16} box={16}><path d="M3 2.500v11L10.500 8zM13.500 2v12" /></Icon></ToolButton>
                <ToolButton $w={30}>3x</ToolButton>
                <ToolButton $w={34}>15m</ToolButton>
                <Divider $m={6} />
                <ToolButton aria-label="Jump to real time"><Icon size={16} box={16}><path d="M2 2.500v11L9 8zM11.500 2v12M14.500 2v12" /></Icon></ToolButton>
              </ReplayControls>
              <CloseReplay aria-label="Close replay"><Icon size={14} box={14}><path d="M1 1l12 12M13 1L1 13" /></Icon></CloseReplay>
            </ReplayBar>
            <RangeBar>
              <Ranges>
                {ranges.map((r) => <TextButton key={r} $tight>{r}</TextButton>)}
              </Ranges>
              <Divider $m={5} />
              <ToolButton $w={28} aria-label="Go to date"><Icon size={18} box={18}><path d="M2.500 7.500V4.500A1.500 1.500 0 014 3h11a1.500 1.500 0 011.500 1.500v10A1.500 1.500 0 0115 16h-4M2.500 6.500h14M5.500 1v3.500M13 1v3.500M1 13h8M6 10l3 3-3 3" /></Icon></ToolButton>
              <Spacer />
              <TextButton>02:38:29 AM UTC-5</TextButton>
              <TextButton>ETH</TextButton>
              <Divider $m={4} />
              <TextButton $on>B-ADJ</TextButton>
            </RangeBar>
            <TradingBar>
              <ReplayMark>
                <svg width="12" height="10" viewBox="0 0 12 10" fill="#fff"><path d="M5.500 0v10L0 5zM11.500 0v10L6 5z" /></svg>
                <OnlineDot />
              </ReplayMark>
              Replay Trading
              <OutlineButton>Trade</OutlineButton>
              <Spacer />
              <ToolButton $w={30} aria-label="Open panel"><Icon size={16} box={16}><path d="M1.500 11L8 5l6.500 6" /></Icon></ToolButton>
              <ToolButton aria-label="Maximize panel"><Icon size={16} box={16}><path d="M1.500 5V3.500a1.500 1.500 0 011.500-1.500h10a1.500 1.500 0 011.500 1.500V5M1.500 11v1.500a1.500 1.500 0 001.500 1.500h10a1.500 1.500 0 001.500-1.500V11" /></Icon></ToolButton>
            </TradingBar>
          </Center>

          <SideBar aria-label="Panels">
            <SideButton aria-label="Watchlist"><Icon><path d="M3 2h16v18l-4-2.500L11 19l-4-1.500L3 20zM6.500 6.500h9M6.500 10h9M6.500 13.500h9" /></Icon></SideButton>
            <SideButton aria-label="Alerts"><Icon><circle cx="11" cy="12" r="8.7" /><path d="M11.500 7v6H7.500M1 5.500L5 2" /></Icon><CountBadge>1</CountBadge></SideButton>
            <SideButton aria-label="Object tree"><Icon><path d="M11 3l9 6-9 6-9-6zM2 13l9 6 9-6" /></Icon></SideButton>
            <SideButton aria-label="Chats"><Icon><path d="M3 2h12a1.500 1.500 0 011.500 1.500v9A1.500 1.500 0 0115 14H6.500L2 17.500V3.500M16.500 7.500H19A1.500 1.500 0 0120.500 9v12l-4-3.500H9.500A1.500 1.500 0 018 16v-1.500" /></Icon></SideButton>
            <Spacer />
            <SideButton aria-label="Screeners"><Icon size={24} box={24}><circle cx="12" cy="12" r="11" /><circle cx="12" cy="12" r="6.5" /><circle cx="12" cy="12" r="1.5" fill="#2e2e2e" /><path d="M12 12l7.500-7.500" /></Icon></SideButton>
            <SideButton aria-label="Pine"><Icon><path d="M11 2l-7.500 10 4-1.500 3.500 3 2.500-3 4.500 1.500zM4.500 14.500L1 20.500h20l-4-6-1-.5" /></Icon></SideButton>
            <SideButton aria-label="Calendar"><Icon><rect x="1.5" y="4" width="19" height="16.5" rx="2" /><path d="M1.500 9.500h19" /><rect x="5" y="1.5" width="2.5" height="4.5" rx="1" fill="#fff" /><rect x="14.5" y="1.5" width="2.5" height="4.5" rx="1" fill="#fff" /></Icon></SideButton>
            <SideButton aria-label="News"><Icon><circle cx="3.5" cy="18.5" r="1.4" /><path d="M2 12.500a7 7 0 017 7M2 7.500a12 12 0 0112 12M2 2.500a17 17 0 0117 17" /></Icon></SideButton>
            <SideButton aria-label="Notifications"><Icon><path d="M4 17V10a7 7 0 0114 0v7l2 2.500H2L4 17zM8.500 19.500c.5 2 4.500 2 5 0" /></Icon></SideButton>
            <SideButton aria-label="Products">
              <svg width="28" height="28" viewBox="0 0 28 28" aria-hidden="true">
                <circle cx="14" cy="14" r="14" fill="#2a2a2a" />
                {[6, 12, 18].map((x) => [6, 12, 18].map((y) => <rect key={`${x}-${y}`} x={x} y={y} width="4" height="4" rx="1" fill="#fff" />))}
              </svg>
            </SideButton>
            <Rule $m={4} />
            <SideButton aria-label="Help"><Icon size={24} box={24}><circle cx="12" cy="12" r="11" /><path d="M8.500 9a3.500 3.500 0 117 0c0 2.500-3.500 2.500-3.500 5.500" /><circle cx="12" cy="17.8" r="1" /></Icon></SideButton>
          </SideBar>
        </Body>
      </Workspace>

      <TaskBar>
        <Weather>
          <svg width="21" height="20" viewBox="0 0 21 20" aria-hidden="true">
            <path d="M8 1c1 3-1 6-6 6 1 4 8 5 10 0 1-3-1-6-4-6z" fill="#eeb33c" />
            <path d="M5 19a4.300 4.300 0 01-.5-8.500A5.500 5.500 0 0115 9.500 4.800 4.800 0 0115.500 19z" fill="#9fbdf0" />
            <path d="M5 19a4.300 4.300 0 01-3-7c2 3 12 5 17 2a4.800 4.800 0 01-3.500 5z" fill="#7d9fe2" />
          </svg>
          <WeatherText><strong>39°F</strong>Mostly cloudy</WeatherText>
        </Weather>

        <TaskIcons>
          <TaskButton aria-label="Start">
            <svg width="20" height="20" viewBox="0 0 20 20" fill="#1b94e0"><path d="M0 0h9.500v9.500H0z" fill="#35b3f0" /><path d="M10.500 0H20v9.500h-9.500zM0 10.500h9.500V20H0z" /><path d="M10.500 10.500H20V20h-9.500z" fill="#0a72cc" /></svg>
          </TaskButton>
          <SearchBox>
            <Icon size={13} box={13} w={1.6}><circle cx="5.5" cy="5.5" r="4.5" /><path d="M9 9l3.300 3.300" /></Icon>
            <SearchInput type="text" aria-label="Search" placeholder="Search" />
            <svg width="34" height="16" viewBox="0 0 34 16" aria-hidden="true">
              <circle cx="8" cy="8" r="7.5" fill="#d2562a" />
              <path d="M1 6c5 0 10 3 12 7M3 2.500c2 5 6 8 12 7M8 .5c-1 5 0 10 3 14M13 3c-4 1-8 5-9 10" stroke="#5c2412" fill="none" />
              <path d="M20 6l6-4 7 4-1 3-6-1-4 7-3-2 3-6z" fill="#a5a5a5" /><circle cx="25" cy="6" r="1.8" fill="#555" />
            </svg>
          </SearchBox>
          <TaskButton aria-label="Task view"><svg width="20" height="18" viewBox="0 0 20 18"><path d="M0 4h15v14H0z" fill="#222" /><path d="M5 0h15v12H5z" fill="#e8e8e8" /><path d="M5 4h10v8H5z" fill="#b4b4b4" /></svg></TaskButton>
          <TaskButton aria-label="Copilot"><CopilotMark size={20} /></TaskButton>
          <TaskButton $open aria-label="File Explorer"><svg width="20" height="18" viewBox="0 0 20 18"><path d="M0 1.500A1.500 1.500 0 011.500 0H7l2 2.500H0z" fill="#d99a1c" /><rect y="2" width="20" height="15" rx="1.5" fill="#f9cc4a" /><path d="M3 18v-4a1.500 1.500 0 011.500-1.500h11A1.500 1.500 0 0117 14v4z" fill="#1a7fc4" /></svg></TaskButton>
          <TaskButton $active aria-label="Edge">
            <svg width="21" height="21" viewBox="0 0 21 21"><defs><linearGradient id="edge" x1="0" y1=".2" x2="1" y2=".3"><stop offset="0" stopColor="#1b86d8" /><stop offset="1" stopColor="#5fd65a" /></linearGradient></defs><circle cx="10.5" cy="10.5" r="10" fill="#1670c4" /><path d="M.7 9.500C1.500 4 5.500.5 10.500.5c6 0 10 4 10 8.500 0 3-2.500 5-5.500 5-2 0-3-.8-3-1.500 0-.6.8-1 .8-2.500C12.800 8 11 6.500 8 6.500c-3.500 0-6.300 1.500-7.300 3z" fill="url(#edge)" /><path d="M8.500 9c-2 4 .5 9 6 9.500 1.500 0 3-.5 4.300-1.500-3 .5-8 .5-10.300-8z" fill="#e8f4ff" /></svg>
          </TaskButton>
          <TaskButton aria-label="Store"><svg width="20" height="20" viewBox="0 0 20 20"><path d="M6 5V1.500h8V5" fill="none" stroke="#2d9fe0" strokeWidth="1.5" /><rect y="4" width="20" height="16" rx="2.5" fill="#17487c" /><path d="M6 8h3.700v3.700H6z" fill="#f25022" /><path d="M10.500 8h3.700v3.700h-3.700z" fill="#7fba00" /><path d="M6 12.500h3.700v3.700H6z" fill="#00a4ef" /><path d="M10.500 12.500h3.700v3.700h-3.700z" fill="#ffb900" /></svg></TaskButton>
          <TaskButton aria-label="Launcher"><Tile bg="#d4141c"><path d="M6 5h3v8h6v3H6z" fill="#fff" /></Tile><TaskBadge>3</TaskBadge></TaskButton>
          <TaskButton aria-label="Antivirus"><svg width="18" height="20" viewBox="0 0 18 20"><path d="M0 0l9 5 9-5v15l-9 5-9-5zM4 6v6.500l5 2.800 5-2.800V6L9 9z" fill="#c01f2c" fillRule="evenodd" /></svg></TaskButton>
          <TaskButton aria-label="Shopping"><svg width="20" height="20" viewBox="0 0 20 20"><rect width="20" height="20" fill="#f6f3e4" /><circle cx="10" cy="10" r="10" fill="#b01238" /><path d="M6 7h8v8H6zM8 9V5.500a2 2 0 014 0V9" fill="none" stroke="#fbd5dc" /></svg></TaskButton>
          <TaskButton aria-label="Outlook"><svg width="20" height="20" viewBox="0 0 20 20"><path d="M3 8L13 1l7 6v10a2 2 0 01-2 2H7z" fill="#2f8ff0" /><path d="M3 9l10-8 5 4-9 7z" fill="#1b55c8" /><path d="M8 12l10-7 2 2v3l-9 6z" fill="#8ec9ff" /><path d="M9 19l11-9v7a2 2 0 01-2 2z" fill="#1b62d8" /><rect y="10" width="9" height="9" rx="1.5" fill="#1257b8" /><circle cx="4.5" cy="14.5" r="2.2" fill="none" stroke="#fff" strokeWidth="1.3" /></svg></TaskButton>
          <TaskButton $open aria-label="TikTok"><Tile bg="#ee1550"><path d="M10.500 4v8.500a2.300 2.300 0 11-2.300-2.300M10.500 4c.3 2.300 1.800 3.500 4 3.700" fill="none" stroke="#fff" strokeWidth="2.2" /></Tile></TaskButton>
          <TaskButton $open aria-label="OBS"><svg width="18" height="18" viewBox="0 0 18 18"><circle cx="9" cy="9" r="9" fill="#1d1d1f" /><path d="M9 9c-3-1-4-4-2-6.500M9 9c2.500-2 5.500-1 6.500 1.500M9 9c0 3-2 5-5 4.500" fill="none" stroke="#d0d0d0" strokeWidth="1.4" /></svg><RedDot /></TaskButton>
        </TaskIcons>

        <Tray>
          <TrayButton aria-label="Hidden icons"><Icon size={9} box={9} w={1.2}><path d="M1 6.500l3.500-3.500L8 6.500" /></Icon></TrayButton>
          <TrayButton aria-label="Updates"><Icon size={14} box={14} w={1.2}><path d="M1.500 6A5.500 5.500 0 0112 4.500M12.500 1.500v3.500H9M1 12.500V9h3.500M1.500 9.500A5.500 5.500 0 006 12.500" /><circle cx="10.5" cy="10.5" r="3" fill="#f09a1a" stroke="none" /></Icon></TrayButton>
          <TrayButton aria-label="Cloud"><Icon size={14} box={14} w={0}><path d="M3 10.500a3 3 0 01.5-6 4 4 0 017.500.5 2.800 2.800 0 01.5 5.500z" fill="#8b8f94" /><circle cx="9.5" cy="9.5" r="4" fill="#1a78c2" /><path d="M9 9h1v3H9zM9 7.200h1v1H9z" fill="#fff" /></Icon></TrayButton>
          <TrayButton aria-label="Microphone"><Icon size={14} box={14} w={1.1}><rect x="5" y="1" width="4" height="7.5" rx="2" fill="#9fcdf0" stroke="#4a7fae" /><path d="M2.800 6.500a4.200 4.200 0 008.400 0M7 10.800V13" /></Icon></TrayButton>
          <TrayButton aria-label="Wi-Fi"><Icon size={14} box={14} w={1.2}><path d="M1 5.500a8.500 8.500 0 0112 0M3 8a5.500 5.500 0 018 0M5 10.200a3 3 0 014 0" /><circle cx="7" cy="12" r=".6" fill="#333" /></Icon></TrayButton>
          <TrayButton $w={12} aria-label="Volume"><Icon size={13} box={14} w={1.1}><path d="M1 5v4h2.500L7 12V2L3.500 5zM9.500 5c1 1.200 1 2.800 0 4" /><path d="M11.500 3c2 2.500 2 5.500 0 8" opacity=".4" /></Icon></TrayButton>
          <TrayButton $w={34} aria-label="Battery"><svg width="17" height="12" viewBox="0 0 17 12"><rect x=".6" y="2.6" width="14" height="8" rx="2" fill="none" stroke="#333" /><rect x="2" y="4" width="5.5" height="5.3" fill="#2d9a2d" /><path d="M16 5v3" stroke="#333" strokeWidth="1.3" /><path d="M8 0L5.500 4.500H8L7 8l3.500-4.500H8z" fill="#222" /></svg></TrayButton>
          <Clock>2:38 AM<br />2/15/2026</Clock>
        </Tray>
      </TaskBar>
    </Page>
  );
}
